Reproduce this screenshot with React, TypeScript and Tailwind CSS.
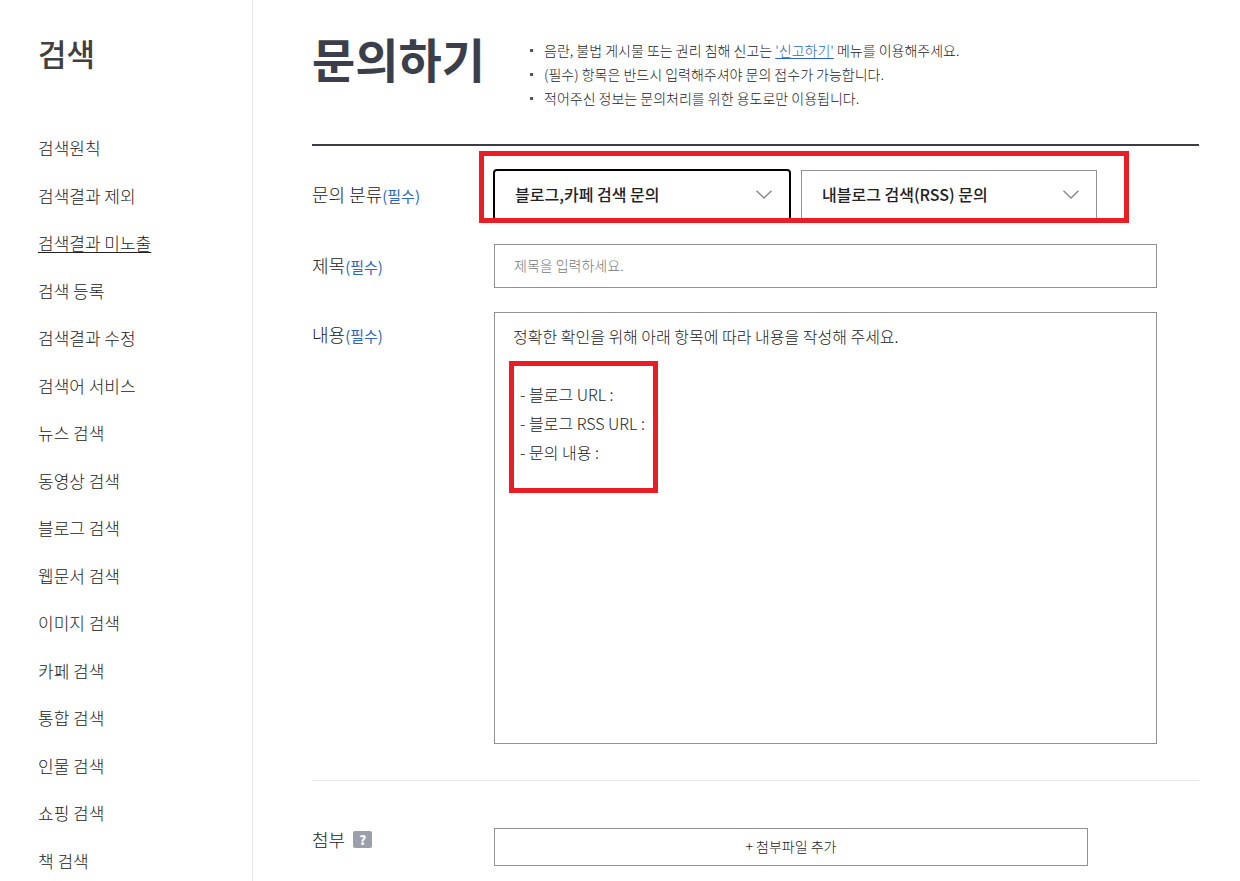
import { useState } from "react";
import type { ReactNode } from "react";

const MENU = [
  "검색원칙",
  "검색결과 제외",
  "검색결과 미노출",
  "검색 등록",
  "검색결과 수정",
  "검색어 서비스",
  "뉴스 검색",
  "동영상 검색",
  "블로그 검색",
  "웹문서 검색",
  "이미지 검색",
  "카페 검색",
  "통합 검색",
  "인물 검색",
  "쇼핑 검색",
  "책 검색",
];

const CURRENT = "검색결과 미노출";

const TEMPLATE = `정확한 확인을 위해 아래 항목에 따라 내용을 작성해 주세요.

  - 블로그 URL :
  - 블로그 RSS URL :
  - 문의 내용 :`;

function Sidebar() {
  return (
    <aside className="w-[253px] shrink-0 border-r border-[#e4e4e4] pt-[31px] pl-[38px]">
      <h2 className="text-[31px] leading-[44px] font-medium text-[#404040]">검색</h2>
      <nav className="mt-[60px]">
        <ul className="flex flex-col gap-[22px] text-[17px] leading-normal font-light text-[#222]">
          {MENU.map((item) => (
            <li key={item}>
              <a
                href="#"
                className={item === CURRENT ? "underline underline-offset-2" : ""}
              >
                {item}
              </a>
            </li>
          ))}
        </ul>
      </nav>
    </aside>
  );
}

function Required() {
  return <span className="text-[15px] font-normal text-[#2c66c4]">(필수)</span>;
}

function Label({ htmlFor, children }: { htmlFor: string; children: ReactNode }) {
  return (
    <label
      htmlFor={htmlFor}
      className="w-[182px] shrink-0 text-[18px] leading-[28px] font-light text-[#222]"
    >
      {children}
    </label>
  );
}

function Notice({ children }: { children: ReactNode }) {
  return (
    <li className="flex items-center gap-[11px]">
      <span className="size-[3px] bg-[#555]" />
      <span>{children}</span>
    </li>
  );
}

function Select({
  id,
  label,
  option,
  active,
}: {
  id: string;
  label?: string;
  option: string;
  active?: boolean;
}) {
  return (
    <div className="relative w-[296px]">
      <select
        id={id}
        aria-label={label}
        className={`h-[50px] w-full appearance-none border bg-white pr-12 pb-[2px] pl-5 text-[16px] font-medium text-[#222] outline-none ${
          active ? "rounded-[3px] border-black ring-1 ring-black" : "border-[#929294]"
        }`}
      >
        <option>{option}</option>
      </select>
      <svg
        viewBox="0 0 16 9"
        className="pointer-events-none absolute top-5 right-[18px] h-[9px] w-4"
        fill="none"
        stroke="#85858a"
        strokeWidth="1.3"
      >
        <path d="M0.5 0.7 L8 8 L15.5 0.7" />
      </svg>
    </div>
  );
}

export default function App() {
  const [title, setTitle] = useState("");
  const [content, setContent] = useState(TEMPLATE);

  return (
    <div className="flex min-h-screen bg-white font-['Noto_Sans_CJK_KR',sans-serif]">
      <Sidebar />

      <main className="min-w-0 flex-1 pr-[41px] pl-[59px]">
        <header className="flex h-[146px] items-start border-b-2 border-[#3b3c45] pt-6">
          <h1 className="w-[218px] shrink-0 text-[47px] leading-[68px] font-bold text-[#3b3f4b]">
            문의하기
          </h1>
          <ul className="pt-[14px] text-[14px] leading-6 font-light text-[#222]">
            <Notice>
              음란, 불법 게시물 또는 권리 침해 신고는{" "}
              <a href="#" className="text-[#2c66c4] underline underline-offset-2">
                '신고하기'
              </a>{" "}
              메뉴를 이용해주세요.
            </Notice>
            <Notice>(필수) 항목은 반드시 입력해주셔야 문의 접수가 가능합니다.</Notice>
            <Notice>적어주신 정보는 문의처리를 위한 용도로만 이용됩니다.</Notice>
          </ul>
        </header>

        <form>
          <div className="flex flex-col gap-6 border-b border-[#e4e4e4] pt-6 pr-[42px] pb-9">
            <div className="flex items-center">
              <Label htmlFor="category">
                문의 분류
                <Required />
              </Label>
              <div className="relative flex gap-[11px]">
                <Select id="category" option="블로그,카페 검색 문의" active />
                <Select id="detail" label="상세 분류" option="내블로그 검색(RSS) 문의" />
                <div className="pointer-events-none absolute -top-[19px] -right-8 -bottom-[3px] -left-[15px] border-[5px] border-[#ea1c24]" />
              </div>
            </div>

            <div className="flex items-center">
              <Label htmlFor="title">
                제목
                <Required />
              </Label>
              <input
                id="title"
                type="text"
                value={title}
                onChange={(e) => setTitle(e.target.value)}
                placeholder="제목을 입력하세요."
                className="h-11 min-w-0 flex-1 border border-[#929294] px-[19px] pb-[2px] text-[14px] font-light text-[#222] placeholder:text-[#777]"
              />
            </div>

            <div className="flex items-start">
              <div className="flex pt-2">
                <Label htmlFor="content">
                  내용
                  <Required />
                </Label>
              </div>
              <div className="relative min-w-0 flex-1">
                <textarea
                  id="content"
                  value={content}
                  onChange={(e) => setContent(e.target.value)}
                  className="block h-[432px] w-full resize-none border border-[#929294] px-[18px] py-[9px] text-[16px] leading-[29px] font-light text-[#222]"
                />
                <div className="pointer-events-none absolute top-[49px] left-[15px] h-[132px] w-[149px] border-[5px] border-[#ea1c24]" />
              </div>
            </div>
          </div>

          <div className="flex items-start pt-[47px]">
            <div className="flex w-[182px] shrink-0 items-center gap-2">
              <span className="text-[18px] leading-[22px] font-light text-[#222]">첨부</span>
              <button
                type="button"
                aria-label="첨부 도움말"
                className="flex h-[17px] w-[19px] items-center justify-center rounded-[2px] bg-[#9a9fa9] text-[13px] leading-none font-black text-white"
              >
                ?
              </button>
            </div>
            <button
              type="button"
              className="h-[38px] w-[594px] border border-[#929294] pb-[2px] text-[14px] font-light text-[#222]"
            >
              + 첨부파일 추가
            </button>
          </div>
        </form>
      </main>
    </div>
  );
}
